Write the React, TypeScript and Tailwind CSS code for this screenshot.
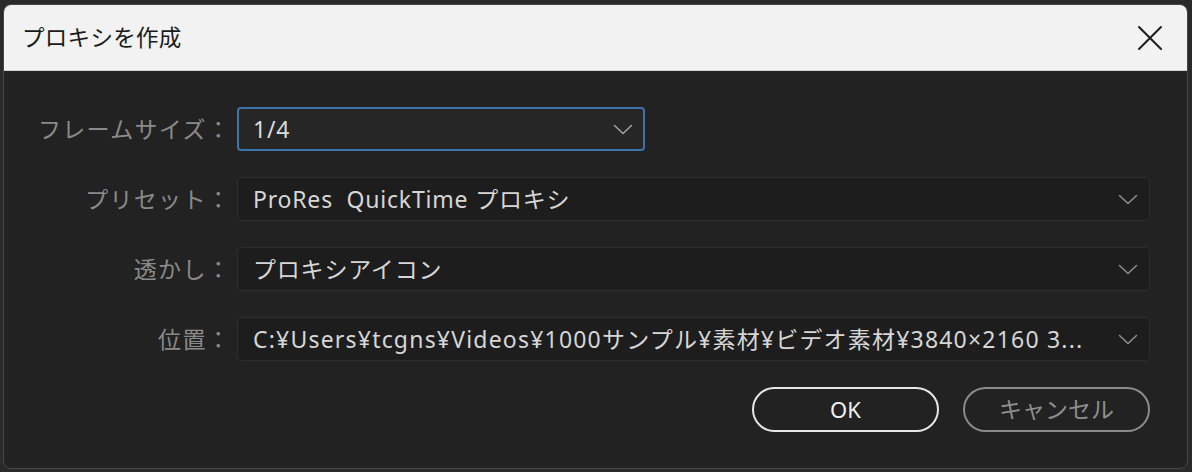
import React from "react";

const font = { fontFamily: "'Noto Sans', 'Noto Sans CJK JP', sans-serif" };

function Chevron({ color }: { color: string }) {
  return (
    <svg width="20" height="11" viewBox="0 0 20 11" fill="none" className="shrink-0">
      <path d="M1.5 1.5 L10 9.5 L18.5 1.5" stroke={color} strokeWidth="1.6" strokeLinecap="round" strokeLinejoin="round" />
    </svg>
  );
}

function Label({ text }: { text: string }) {
  return (
    <div className="w-[227px] shrink-0 text-right text-[23px] leading-normal tracking-[1.3px] text-[#8a8a8a]">{text}</div>
  );
}

function Row({ label, value, wide }: { label: string; value: string; wide?: boolean }) {
  return (
    <div className="flex h-[44px] items-center">
      <Label text={label} />
      <div className="ml-[6px] flex h-full min-w-0 flex-1 items-center rounded-[4px] border border-[#2d2d2d] bg-[#1d1d1d] pl-[15px] pr-[11px]">
        <span
          className={
            wide
              ? "min-w-0 flex-1 whitespace-pre text-[23px] leading-normal tracking-[1.2px] text-[#d6d6d6]"
              : "min-w-0 flex-1 whitespace-pre text-[23px] leading-normal tracking-[0.8px] text-[#d6d6d6]"
          }
        >
          {value}
        </span>
        <Chevron color="#8c8c8c" />
      </div>
    </div>
  );
}

export default function App() {
  return (
    <div className="h-[472px] w-[1192px] bg-[#2a2a2a] pb-[3px] pl-[3px] pr-[4px] pt-[4px]" style={font}>
      <div className="flex h-full flex-col overflow-hidden rounded-[8px] border border-[#464646] bg-[#222222]">
        <div className="flex h-[66px] shrink-0 items-center justify-between border-b border-[#cfcfcf] bg-[#f2f2f2] pl-[18px] pr-[24px]">
          <span className="text-[22.5px] leading-normal tracking-[0.3px] text-[#1a1a1a]">プロキシを作成</span>
          <svg width="26" height="26" viewBox="0 0 26 26" fill="none">
            <path d="M2 2 L24 24 M24 2 L2 24" stroke="#1c1c1c" strokeWidth="2" strokeLinecap="round" />
          </svg>
        </div>
        <div className="flex flex-1 flex-col gap-[26px] pr-[37px] pt-[36px]">
          <div className="flex h-[44px] items-center">
            <Label text="フレームサイズ：" />
            <div className="ml-[6px] flex h-full w-[408px] items-center rounded-[4px] border-2 border-[#3d72ad] bg-[#262626] pl-[14px] pr-[10px]">
              <span className="flex-1 text-[23px] leading-normal tracking-[0.8px] text-[#dcdcdc]">1/4</span>
              <Chevron color="#a0a0a0" />
            </div>
          </div>
          <Row label="プリセット：" value="ProRes  QuickTime プロキシ" />
          <Row label="透かし：" value="プロキシアイコン" />
          <Row label="位置：" value="C:¥Users¥tcgns¥Videos¥1000サンプル¥素材¥ビデオ素材¥3840×2160 3..." wide />
          <div className="flex justify-end gap-[24px]">
            <button className="flex h-[45px] w-[187px] items-center justify-center rounded-full border-2 border-[#e6e6e6] text-[22px] leading-normal text-[#f0f0f0]">
              OK
            </button>
            <button className="flex h-[45px] w-[187px] items-center justify-center rounded-full border-2 border-[#8a8a8a] text-[23px] leading-normal text-[#8e8e8e]">
              キャンセル
            </button>
          </div>
        </div>
      </div>
    </div>
  );
}
